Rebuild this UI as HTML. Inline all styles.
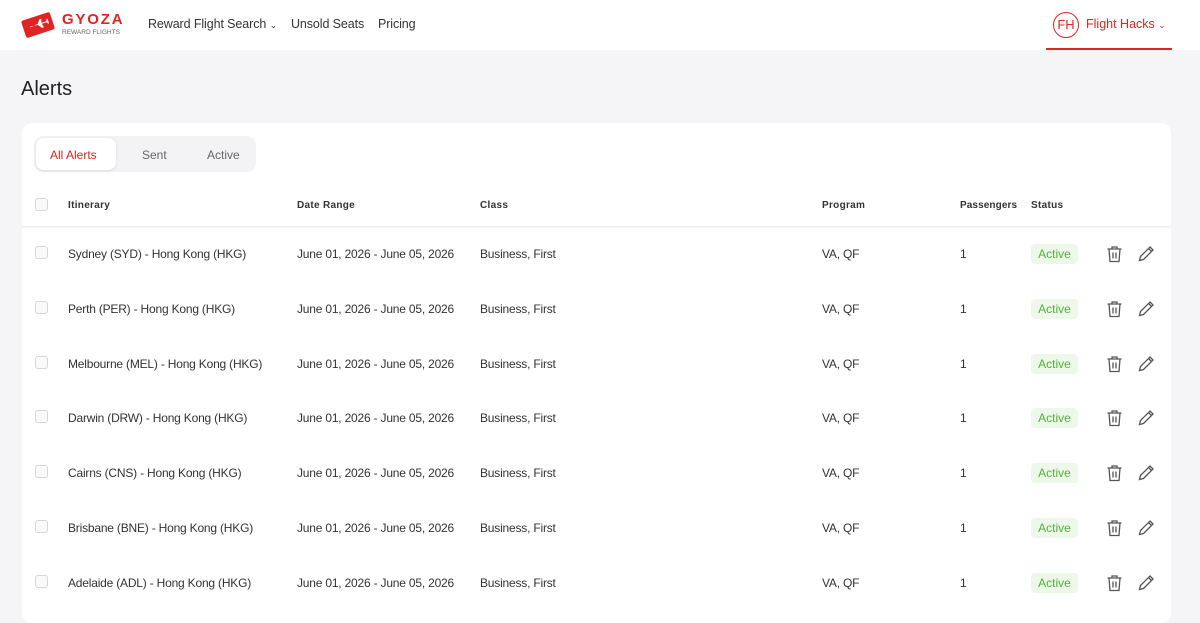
<!DOCTYPE html>
<html><head><meta charset="utf-8"><style>
*{box-sizing:border-box;margin:0;padding:0}
body{width:1200px;height:615px;overflow:hidden;background:#f5f5f7;font-family:"Liberation Sans",sans-serif;color:#2b2b2b;position:relative}
.hdr{position:absolute;left:0;top:0;width:1200px;height:50px;background:#fff}
.abs{position:absolute}
.nav{font-size:12.5px;color:#333;top:17px;letter-spacing:-.1px}
.card{position:absolute;left:22px;top:123px;width:1149px;height:500px;background:#fff;border-radius:10px}
.tabs{position:absolute;left:34px;top:136px;width:222px;height:36px;background:#f3f3f5;border-radius:9px}
.tab{position:absolute;top:148px;font-size:12px;color:#666}
.cb{position:absolute;left:35px;width:13px;height:13px;border:1px solid #d6d6d6;border-radius:3px;background:#fafafa}
.th{position:absolute;top:200px;font-size:10px;font-weight:bold;color:#333;letter-spacing:.3px}
.td{position:absolute;font-size:12px;color:#333;letter-spacing:-.2px}
.badge{position:absolute;left:1031px;width:47px;height:20px;background:#eef8ea;color:#52b03a;font-size:12px;border-radius:4px;text-align:center;line-height:20px}
</style></head><body>
<div class="hdr"></div>
<svg class="abs" style="left:20px;top:9px" width="36" height="32" viewBox="0 0 36 32"><g transform="rotate(-18 18 16)"><rect x="3" y="7" width="30" height="18" rx="2" fill="#e02424"/><path d="M10 16l8-1 3-4 2 0-1 4 5 0 1-2 1 0 0 5-1 0-1-2-5 0 1 4-2 0-3-4-8-1z" fill="#fff"/></g></svg>
<div class="abs" style="left:62px;top:11px;font-size:15px;color:#e02424;letter-spacing:1.8px;font-weight:bold">GYOZA</div>
<div class="abs" style="left:62px;top:29px;font-size:6.5px;color:#666">REWARD FLIGHTS</div>
<div class="abs nav" style="left:148px">Reward Flight Search <span style="font-size:9px">⌄</span></div>
<div class="abs nav" style="left:291px">Unsold Seats</div>
<div class="abs nav" style="left:378px">Pricing</div>
<div class="abs" style="left:1053px;top:12px;width:26px;height:26px;border:1.5px solid #e02424;border-radius:50%;color:#e02424;font-size:13px;text-align:center;line-height:23px">FH</div>
<div class="abs" style="left:1086px;top:17px;font-size:12.5px;color:#e02424">Flight Hacks <span style="font-size:9px">⌄</span></div>
<div class="abs" style="left:1046px;top:48px;width:126px;height:2px;background:#e02424"></div>
<div class="abs" style="left:21px;top:78px;font-size:20px;color:#222">Alerts</div>
<div class="card"></div>
<div class="tabs"></div>
<div class="abs" style="left:36px;top:138px;width:80px;height:32px;background:#fff;border-radius:8px;box-shadow:0 1px 3px rgba(0,0,0,.1)"></div>
<div class="tab" style="left:50px;color:#e02424">All Alerts</div>
<div class="tab" style="left:142px">Sent</div>
<div class="tab" style="left:207px">Active</div>
<div class="cb" style="top:198px"></div>
<div class="th" style="left:68px">Itinerary</div>
<div class="th" style="left:297px">Date Range</div>
<div class="th" style="left:480px">Class</div>
<div class="th" style="left:822px">Program</div>
<div class="th" style="left:960px;letter-spacing:.1px">Passengers</div>
<div class="th" style="left:1031px">Status</div>
<div class="abs" style="left:22px;top:226px;width:1149px;height:3px;background:linear-gradient(#ececec,#fff)"></div>
<div id="rows"></div>
<script>
const names=["Sydney (SYD)","Perth (PER)","Melbourne (MEL)","Darwin (DRW)","Cairns (CNS)","Brisbane (BNE)","Adelaide (ADL)"];
let h="";
names.forEach((n,i)=>{const y=254+i*54.8;
h+=`<div class="cb" style="top:${y-8}px"></div>
<div class="td" style="left:68px;top:${y-7}px">${n} - Hong Kong (HKG)</div>
<div class="td" style="left:297px;top:${y-7}px">June 01, 2026 - June 05, 2026</div>
<div class="td" style="left:480px;top:${y-7}px">Business, First</div>
<div class="td" style="left:822px;top:${y-7}px">VA, QF</div>
<div class="td" style="left:960px;top:${y-7}px">1</div>
<div class="badge" style="top:${y-10}px">Active</div>
<svg class="abs" style="left:1106px;top:${y-9}px" width="17" height="18" viewBox="0 0 17 18" fill="none" stroke="#555" stroke-width="1.3"><path d="M1.5 4h14M6 4V2h5v2M3 4l1 12.5h9L14 4M7 7.5v6M10 7.5v6"/></svg>
<svg class="abs" style="left:1138px;top:${y-9}px" width="17" height="17" viewBox="0 0 17 17" fill="none" stroke="#555" stroke-width="1.3"><path d="M12 2l3 3-9.5 9.5L1.5 15.5 2.5 11.5z M10.5 3.5l3 3"/></svg>`});
document.getElementById("rows").innerHTML=h;
</script>
</body></html>
